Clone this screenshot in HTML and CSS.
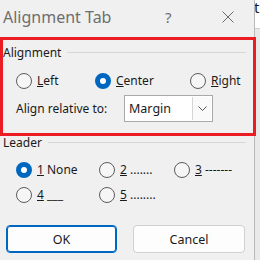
FILE: index.html
```html
<!DOCTYPE html>
<html lang="en">
<head>
  <meta charset="UTF-8">
  <title>Alignment Tab</title>
  <link rel="stylesheet" href="styles.css">
</head>
<body>
  <div class="screen">
    <div class="dialog">
      <div class="titlebar">
        <span class="title">Alignment Tab</span>
        <span class="help">?</span>
        <span class="close">
          <svg width="12" height="12" viewBox="0 0 12 12"><path d="M0.5 0.5 L11.5 11.5 M11.5 0.5 L0.5 11.5" stroke="#6e6e6e" stroke-width="1" fill="none"/></svg>
        </span>
      </div>

      <div class="content">
        <div class="group-head"><span>Alignment</span><span class="rule"></span></div>
        <div class="radio-row align-row">
          <label class="radio"><span class="dot"></span><span><u>L</u>eft</span></label>
          <label class="radio"><span class="dot checked"></span><span><u>C</u>enter</span></label>
          <label class="radio"><span class="dot"></span><span><u>R</u>ight</span></label>
        </div>
        <div class="relative-row">
          <span class="relative-label">Align relative to:</span>
          <div class="combo">
            <span class="combo-value">Margin</span>
            <span class="combo-drop">
              <svg width="9" height="5" viewBox="0 0 9 5"><path d="M0.5 0.5 L4.5 4.5 L8.5 0.5" stroke="#555" stroke-width="1" fill="none"/></svg>
            </span>
          </div>
        </div>

        <div class="group-head leader-head"><span>Leader</span><span class="rule"></span></div>
        <div class="radio-row leader-row">
          <label class="radio"><span class="dot checked"></span><span><u>1</u> None</span></label>
          <label class="radio"><span class="dot"></span><span><u>2</u> .......</span></label>
          <label class="radio"><span class="dot"></span><span><u>3</u> -------</span></label>
        </div>
        <div class="radio-row leader-row second">
          <label class="radio"><span class="dot"></span><span><u>4</u> ___</span></label>
          <label class="radio"><span class="dot"></span><span><u>5</u> ........</span></label>
        </div>

        <div class="buttons">
          <button class="btn default">OK</button>
          <button class="btn">Cancel</button>
        </div>
      </div>

      <div class="highlight"></div>
    </div>

    <div class="backdrop">
      <div class="backdrop-top">t</div>
      <div class="backdrop-rest"></div>
    </div>
  </div>
</body>
</html>
```

FILE: styles.css
```css
* {
  box-sizing: border-box;
  margin: 0;
  padding: 0;
}

body {
  font-family: 'Noto Sans', 'DejaVu Sans', sans-serif;
  font-size: 12px;
  color: #1a1a1a;
  background: #f0f0f0;
  width: 260px;
  height: 260px;
  overflow: hidden;
}

.screen {
  display: flex;
  height: 260px;
}

.dialog {
  width: 255px;
  height: 260px;
  background: #f0f0f0;
  border-right: 1px solid #b9b9b9;
  position: relative;
  flex-shrink: 0;
}

.titlebar {
  height: 37px;
  display: flex;
  align-items: center;
  padding: 0 0 4px 3px;
  color: #6e6e6e;
}

.title {
  font-size: 16px;
  width: 162px;
}

.help {
  font-size: 15px;
  width: 57px;
}

.close {
  display: flex;
  margin-top: 1px;
}

.content {
  padding: 0 8px 0 0;
}

.group-head {
  display: flex;
  align-items: center;
  height: 24px;
  margin-top: 3px;
  padding-left: 3px;
}

.group-head .rule {
  flex: 1;
  height: 1px;
  background: #d7d7d7;
  margin-left: 6px;
}

.radio-row {
  display: grid;
  padding-left: 16px;
  height: 16px;
  margin-top: 8px;
}

.align-row {
  grid-template-columns: 79px 95px auto;
}

.leader-row {
  grid-template-columns: 83px 75px auto;
  margin-top: 11px;
}

.leader-row.second {
  margin-top: 9px;
}

.radio {
  display: flex;
  align-items: center;
  gap: 5px;
  white-space: nowrap;
}

.dot {
  width: 16px;
  height: 16px;
  border-radius: 50%;
  border: 1px solid #5c5c5c;
  background: #f6f6f6;
  flex-shrink: 0;
}

.dot.checked {
  border: 5px solid #0067c0;
  background: #ffffff;
}

.relative-row {
  display: flex;
  align-items: center;
  padding-left: 16px;
  margin-top: 7px;
}

.relative-label {
  width: 108px;
}

.combo {
  width: 89px;
  height: 27px;
  display: flex;
  align-items: stretch;
  background: #ffffff;
  border: 1px solid #a9a9a9;
}

.combo-value {
  flex: 1;
  display: flex;
  align-items: center;
  padding-left: 4px;
  font-size: 12.5px;
}

.combo-drop {
  width: 19px;
  margin: 1px;
  border-left: 1px solid #d5d5d5;
  background: #fafafa;
  display: flex;
  align-items: center;
  justify-content: center;
}

.leader-head {
  margin-top: 12px;
  height: 16px;
}

.buttons {
  display: flex;
  gap: 16px;
  padding-left: 6px;
  margin-top: 23px;
}

.btn {
  font-family: inherit;
  font-size: 12.5px;
  color: #1a1a1a;
  height: 28px;
  width: 112px;
  background: #fdfdfd;
  border: 1px solid #d0d0d0;
  border-radius: 4px;
}

.btn.default {
  width: 111px;
  border-color: #0067c0;
  box-shadow: inset 0 0 0 1px #0067c0;
}

.highlight {
  position: absolute;
  left: 0;
  top: 37px;
  width: 256px;
  height: 99px;
  border: 3px solid #ec1c24;
  z-index: 2;
}

.backdrop {
  flex: 1;
  display: flex;
  flex-direction: column;
}

.backdrop-top {
  height: 29px;
  background: #ffffff;
  border-bottom: 1px solid #cfcfcf;
  font-size: 15px;
  line-height: 14px;
  margin-left: -1px;
  overflow: hidden;
}

.backdrop-rest {
  flex: 1;
  background: #e9e9e9;
}
```
